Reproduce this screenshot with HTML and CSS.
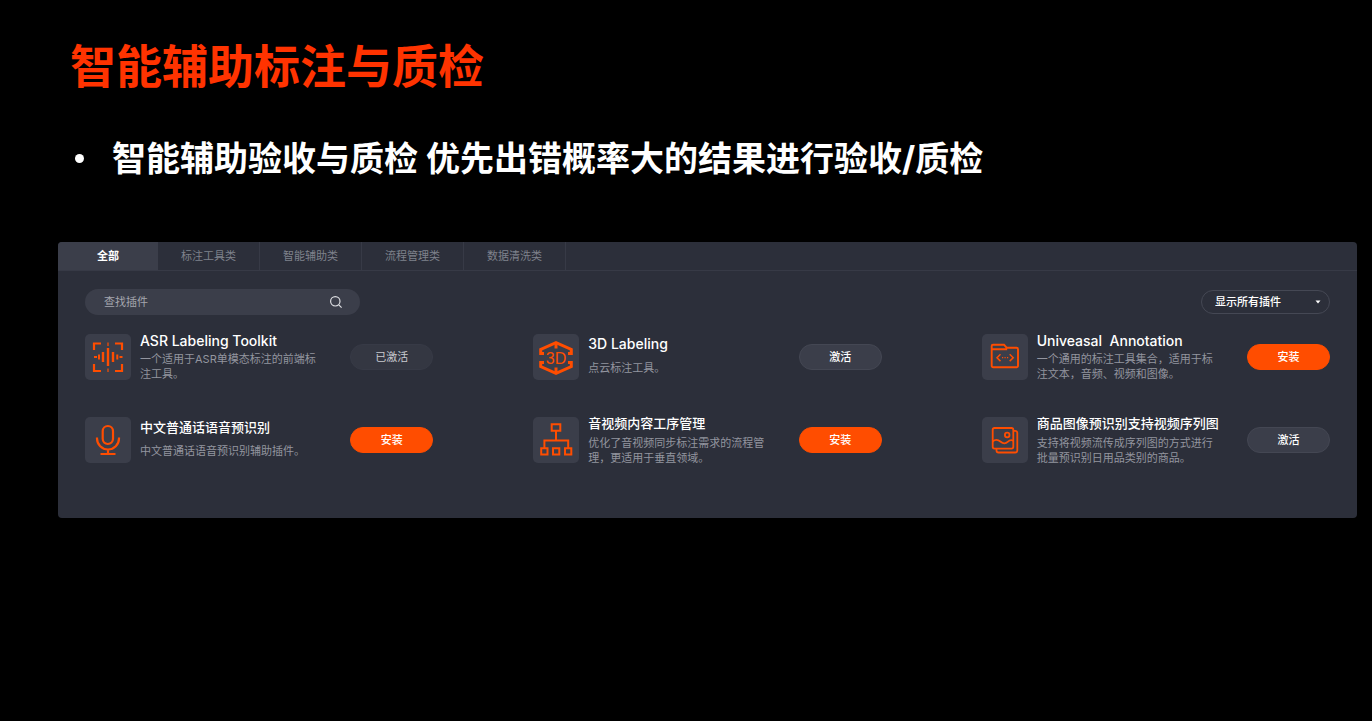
FILE: index.html
```html
<!DOCTYPE html>
<html lang="zh-CN">
<head>
<meta charset="utf-8">
<title>智能辅助标注与质检</title>
<link rel="stylesheet" href="styles.css">
</head>
<body>
<main class="slide">
  <h1 class="slide-title">智能辅助标注与质检</h1>
  <ul class="points">
    <li class="point">智能辅助验收与质检 优先出错概率大的结果进行验收/质检</li>
  </ul>

  <section class="panel">
    <nav class="tabs">
      <button class="tab tab-active" type="button">全部</button>
      <button class="tab" type="button">标注工具类</button>
      <button class="tab" type="button">智能辅助类</button>
      <button class="tab" type="button">流程管理类</button>
      <button class="tab" type="button">数据清洗类</button>
    </nav>

    <div class="toolbar">
      <label class="search">
        <input class="search-input" type="text" placeholder="查找插件" aria-label="查找插件">
        <svg class="search-icon" viewBox="0 0 14 14"><circle cx="6.3" cy="6.3" r="4.7"/><path d="M9.8 9.8 12.6 12.6"/></svg>
      </label>
      <label class="filter">
        <select class="filter-select" aria-label="插件筛选"><option>显示所有插件</option></select>
        <svg class="filter-arrow" viewBox="0 0 6 4"><path d="M.5.5h5L3 3.5z"/></svg>
      </label>
    </div>

    <div class="plugins">
      <article class="plugin">
        <svg class="plugin-icon" viewBox="0 0 46 46">
          <path stroke-width="2.200" d="M9 16V9.500h7M30 9.500h7V16M37 30v7h-7M16 37H9v-7"/>
          <path stroke-width="2.400" d="M23 14v18M18 18v10M28 18v10"/>
          <path stroke-width="2" d="M14 20.500v5M32.300 20.500v5M9 23h3M34.500 23h3"/>
          <path stroke-width="1.200" d="M23 8.500V12M23 34.500V38"/>
        </svg>
        <div class="plugin-text">
          <h2 class="plugin-name plugin-name-latin">ASR Labeling Toolkit</h2>
          <p class="plugin-desc">一个适用于ASR单模态标注的前端标注工具。</p>
        </div>
        <button class="action action-done" type="button">已激活</button>
      </article>

      <article class="plugin">
        <svg class="plugin-icon" viewBox="0 0 46 46">
          <path stroke-width="3" d="M11 19.500H7.700V15.500L23 8.700l15.300 6.800v4H35M11 28.500H7.700v4L23 39.300l15.300-6.800v-4H35"/>
          <path class="solid" d="M21.500 9h3v5.500h-3zM21.500 33.500h3V39h-3z"/>
          <text class="icon-label" x="23" y="29.500">3D</text>
        </svg>
        <div class="plugin-text plugin-text-loose">
          <h2 class="plugin-name plugin-name-latin">3D Labeling</h2>
          <p class="plugin-desc">点云标注工具。</p>
        </div>
        <button class="action" type="button">激活</button>
      </article>

      <article class="plugin">
        <svg class="plugin-icon" viewBox="0 0 46 46">
          <path stroke-width="1.900" d="M9.700 15.200V12a1.300 1.300 0 0 1 1.300-1.300h11l2.600 3H34.500a1.500 1.500 0 0 1 1.500 1.500v16.600a1.500 1.500 0 0 1-1.500 1.500H11.200a1.500 1.500 0 0 1-1.500-1.500V15.200h15.500"/>
          <path stroke-width="1.500" d="M18.500 20.300 15 23.700l3.500 3.400M27.700 20.300l3.500 3.400-3.500 3.400"/>
          <path stroke-width="1.200" d="M20 23.700h1.200M22.500 23.700h1.200M25 23.700h1.200"/>
        </svg>
        <div class="plugin-text">
          <h2 class="plugin-name plugin-name-latin">Univeasal&nbsp; Annotation</h2>
          <p class="plugin-desc">一个通用的标注工具集合，适用于标注文本，音频、视频和图像。</p>
        </div>
        <button class="action action-install" type="button">安装</button>
      </article>

      <article class="plugin">
        <svg class="plugin-icon" viewBox="0 0 46 46">
          <rect x="17.700" y="9" width="10.300" height="18" rx="5.150" stroke-width="2.200"/>
          <path stroke-width="2.200" d="M12 20.500v1a11 11 0 0 0 22 0v-1M23 32.500v5M15.500 37h15"/>
        </svg>
        <div class="plugin-text plugin-text-loose">
          <h2 class="plugin-name">中文普通话语音预识别</h2>
          <p class="plugin-desc">中文普通话语音预识别辅助插件。</p>
        </div>
        <button class="action action-install" type="button">安装</button>
      </article>

      <article class="plugin">
        <svg class="plugin-icon" viewBox="0 0 46 46">
          <path stroke-width="2" d="M18.700 7.300h8.600v6.500h-8.600zM8.200 31.300h6.300v6.300H8.200zM20 31.300h6.300v6.300H20zM32 31.300h6.300v6.300H32zM23 13.800v9.700M11.400 31v-7.500h23.800V31"/>
        </svg>
        <div class="plugin-text plugin-text-wide">
          <h2 class="plugin-name">音视频内容工序管理</h2>
          <p class="plugin-desc">优化了音视频同步标注需求的流程管理，更适用于垂直领域。</p>
        </div>
        <button class="action action-install" type="button">安装</button>
      </article>

      <article class="plugin">
        <svg class="plugin-icon" viewBox="0 0 46 46">
          <g stroke-width="1.800"><rect x="10.700" y="11" width="20.600" height="20.600" rx="1.800"/><circle cx="25.200" cy="18" r="2.300"/><path d="M10.700 24.500c3-2.800 5.700-1.700 8 .3s5 2 7.300-.2 3.500-1.700 5.300-1M31.500 13.800h1.800a2 2 0 0 1 2 2V33.500a2 2 0 0 1-2 2H16.500a2 2 0 0 1-2-2v-1.700"/></g>
        </svg>
        <div class="plugin-text plugin-text-wide">
          <h2 class="plugin-name">商品图像预识别支持视频序列图</h2>
          <p class="plugin-desc">支持将视频流传成序列图的方式进行批量预识别日用品类别的商品。</p>
        </div>
        <button class="action" type="button">激活</button>
      </article>
    </div>
  </section>
</main>
</body>
</html>
```
FILE: styles.css
```css
* {
  box-sizing: border-box;
}

body {
  margin: 0;
  background: #000;
  color: #fff;
  font-family: Inter, "Noto Sans CJK SC", sans-serif;
}

button,
input,
select {
  font: inherit;
  color: inherit;
  border: 0;
  margin: 0;
  padding: 0;
}

.slide {
  padding: 32px 15px 32px 58px;
}

.slide-title {
  margin: 0 0 35px 12px;
  color: #ff3300;
  font-size: 46px;
  font-weight: 700;
  line-height: 68px;
}

.points {
  margin: 0 0 60px;
  padding: 0 0 0 54px;
  list-style: none;
}

.point {
  font-size: 34px;
  font-weight: 700;
  line-height: 47px;
}

.point::before {
  content: "";
  float: left;
  width: 9px;
  height: 9px;
  margin: 19px 0 0 -37px;
  border-radius: 50%;
  background: #fff;
}

.panel {
  min-height: 276px;
  border-radius: 4px;
  background: #2c2f3a;
  overflow: hidden;
}

.tabs {
  display: flex;
  border-bottom: 1px solid #373a46;
}

.tab {
  width: 102px;
  height: 28px;
  padding-bottom: 2px;
  border-right: 1px solid #373a46;
  background: none;
  color: #7f828c;
  font-size: 11px;
}

.tab-active {
  width: 100px;
  border-right: 0;
  background: #3b3e4a;
  color: #fff;
  font-weight: 700;
}

.toolbar {
  display: flex;
  align-items: center;
  justify-content: space-between;
  padding: 18px 27px 0;
}

.search {
  display: flex;
  align-items: center;
  width: 275px;
  height: 26px;
  padding: 0 17px 0 19px;
  border-radius: 13px;
  background: #3b3e4a;
  font-size: 11px;
}

.search-input {
  flex: 1;
  min-width: 0;
  background: none;
  outline: none;
}

.search-input::placeholder {
  color: #a4a6ae;
}

.search-icon {
  width: 14px;
  height: 14px;
  fill: none;
  stroke: #dddee2;
  stroke-width: 1.2;
}

.filter {
  display: flex;
  align-items: center;
  width: 129px;
  height: 24px;
  padding: 0 8px 0 13px;
  border: 1px solid #454854;
  border-radius: 12px;
  font-size: 11px;
  font-weight: 500;
}

.filter-select {
  flex: 1;
  appearance: none;
  background: none;
}

.filter-arrow {
  width: 6px;
  height: 4px;
  fill: #fff;
}

.plugins {
  display: grid;
  grid-template-columns: repeat(3, 1fr);
  gap: 37px 100px;
  padding: 19px 27px 54px;
}

.plugin {
  display: flex;
  align-items: center;
  height: 46px;
}

.plugin-icon {
  flex: none;
  width: 46px;
  height: 46px;
  margin-right: 9px;
  border-radius: 5px;
  background: #3b3e4a;
  fill: none;
  stroke: #ff4d00;
}

.plugin-icon .solid {
  fill: #ff4d00;
  stroke: none;
}

.icon-label {
  fill: #ff4d00;
  stroke: none;
  font-family: "Liberation Sans", sans-serif;
  font-size: 16px;
  text-anchor: middle;
}

.plugin-text {
  display: grid;
  flex: 1;
  gap: 2px;
  min-width: 0;
}

.plugin-text-wide {
  gap: 4px;
}

.plugin-text-loose {
  gap: 8px;
  padding-bottom: 4px;
}

.plugin-name {
  margin: 0;
  font-size: 13px;
  font-weight: 500;
  line-height: 18px;
  white-space: nowrap;
}

.plugin-name-latin {
  font-size: 14px;
}

.plugin-desc {
  max-width: 182px;
  margin: 0;
  color: #93959f;
  font-size: 11px;
  line-height: 15px;
}

.action {
  flex: none;
  width: 83px;
  height: 26px;
  padding-bottom: 2px;
  border: 1px solid #444753;
  border-radius: 13px;
  background: #3b3e4a;
  font-size: 11px;
  font-weight: 500;
}

.action-done {
  border-color: #373a46;
  background: #343742;
  color: #c9cad0;
  font-weight: 400;
}

.action-install {
  border-color: #ff4d00;
  background: #ff4d00;
}
```
